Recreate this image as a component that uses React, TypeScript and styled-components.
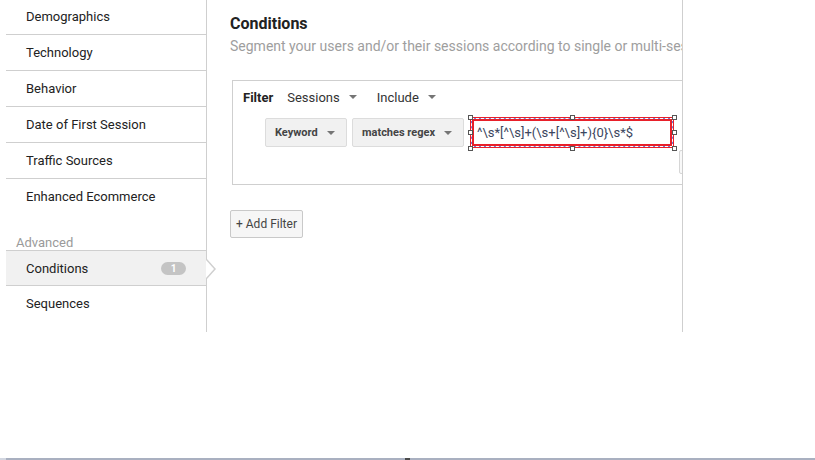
import styled, { createGlobalStyle, css } from "styled-components";

const GlobalStyle = createGlobalStyle`
  html, body {
    margin: 0;
    padding: 0;
    background: #ffffff;
  }
  body {
    font-family: Roboto, "Liberation Sans", Arial, sans-serif;
    color: #222222;
  }
  * {
    box-sizing: border-box;
  }
`;

const Page = styled.div`
  display: flex;
  flex-direction: column;
  width: 815px;
  height: 460px;
  overflow: hidden;
`;

const Layout = styled.div`
  display: flex;
  height: 332px;
`;

const Sidebar = styled.nav`
  width: 207px;
  padding-left: 6px;
  border-right: 1px solid #cfcfcf;
  position: relative;
`;

const NavList = styled.div`
  margin-top: -1px;
  display: flex;
  flex-direction: column;
`;

const NavItem = styled.div<{ active?: boolean; last?: boolean; plain?: boolean }>`
  position: relative;
  display: flex;
  align-items: center;
  justify-content: space-between;
  height: 36px;
  padding: 0 20px 0 20px;
  font-size: 13px;
  color: #222222;
  border-bottom: 1px solid #cfcfcf;

  ${(p) =>
    p.last &&
    css`
      height: 35px;
      border-bottom: 0;
    `}

  ${(p) =>
    p.plain &&
    css`
      border-bottom-color: transparent;
    `}

  ${(p) =>
    p.active &&
    css`
      background: #f1f1f1;
      border-top: 1px solid #cfcfcf;
    `}
`;

const GroupLabel = styled.div`
  height: 36px;
  display: flex;
  align-items: flex-end;
  padding: 0 0 0 10px;
  font-size: 13px;
  color: #9a9a9a;
`;

const Badge = styled.span`
  display: inline-flex;
  align-items: center;
  justify-content: center;
  width: 25px;
  height: 13px;
  border-radius: 7px;
  background: #c4c4c4;
  color: #ffffff;
  font-size: 10px;
  font-weight: 700;
`;

const Pointer = styled.span`
  position: absolute;
  right: -10px;
  top: 8px;
  width: 0;
  height: 0;
  border-top: 10px solid transparent;
  border-bottom: 10px solid transparent;
  border-left: 9px solid #cfcfcf;

  &::after {
    content: "";
    position: absolute;
    left: -10px;
    top: -9px;
    border-top: 9px solid transparent;
    border-bottom: 9px solid transparent;
    border-left: 8px solid #ffffff;
  }
`;

const Main = styled.section`
  width: 476px;
  border-right: 1px solid #cfcfcf;
  padding: 14px 0 0 23px;
  overflow: hidden;
`;

const Title = styled.h2`
  margin: 0;
  font-size: 16px;
  font-weight: 700;
  color: #222222;
  line-height: 20px;
`;

const Subtitle = styled.p`
  margin: 3px 0 0;
  font-size: 14px;
  line-height: 18px;
  color: #9e9e9e;
  white-space: nowrap;
`;

const FilterBox = styled.div`
  position: relative;
  margin: 25px 0 0 2px;
  width: 520px;
  height: 105px;
  border: 1px solid #cfcfcf;
  padding: 7px 0 0 10px;
`;

const FilterHeader = styled.div`
  display: flex;
  align-items: center;
  gap: 14px;
  height: 18px;
  font-size: 13px;
  color: #333333;
`;

const FilterLabel = styled.span`
  font-weight: 700;
  color: #222222;
`;

const TextSelect = styled.span`
  display: inline-flex;
  align-items: center;
  gap: 9px;
  margin-right: 6px;
`;

const Caret = styled.span`
  display: inline-block;
  width: 0;
  height: 0;
  border-left: 4px solid transparent;
  border-right: 4px solid transparent;
  border-top: 4px solid #757575;
`;

const RuleRow = styled.div`
  display: flex;
  align-items: center;
  gap: 5px;
  margin: 11px 0 0 22px;
`;

const DropButton = styled.div<{ width: number }>`
  display: flex;
  align-items: center;
  justify-content: space-between;
  width: ${(p) => p.width}px;
  height: 29px;
  padding: 0 11px 0 9px;
  background: #f1f1f1;
  border: 1px solid #dcdcdc;
  border-radius: 2px;
  font-size: 11px;
  font-weight: 700;
  color: #444444;
`;

const InputWrap = styled.div`
  position: relative;
  width: 204px;
  height: 31px;
  margin-left: 1px;
  border: 4px solid #e8202a;
  background: #ffffff;
  display: flex;
  align-items: center;
  padding-left: 3px;
  font-size: 13px;
  color: #3b4660;
  white-space: nowrap;

  &::before {
    content: "";
    position: absolute;
    inset: -3px;
    border: 1px solid #6c7fd8;
    pointer-events: none;
  }
  &::after {
    content: "";
    position: absolute;
    inset: -3px;
    border: 1px dashed #ffffff;
    pointer-events: none;
  }
`;

const Handle = styled.span<{ x: string; y: string }>`
  position: absolute;
  left: ${(p) => p.x};
  top: ${(p) => p.y};
  width: 5px;
  height: 5px;
  margin: -2.5px 0 0 -2.5px;
  background: #ffffff;
  border: 1px solid #555555;
  z-index: 2;
`;

const PeekButton = styled.div`
  position: absolute;
  left: 446px;
  top: 69px;
  width: 40px;
  height: 24px;
  border: 1px solid #d6d6d6;
  border-radius: 2px;
  background: #f8f8f8;
`;

const AddFilter = styled.button`
  margin-top: 25px;
  height: 28px;
  padding: 0 5px;
  background: #f6f6f6;
  border: 1px solid #c9c9c9;
  border-radius: 2px;
  font-family: inherit;
  font-size: 12px;
  color: #444444;
`;

const BottomBar = styled.div`
  margin-top: auto;
  height: 2px;
  display: flex;
  background: #a9b0c0;
`;

const BarStart = styled.span`
  width: 6px;
  background: #d2d6e0;
`;

const BarMark = styled.span`
  width: 5px;
  margin-left: 399px;
  background: #4a4a4a;
`;

const sections = [
  "Demographics",
  "Technology",
  "Behavior",
  "Date of First Session",
  "Traffic Sources",
  "Enhanced Ecommerce",
];

const handles: [string, string][] = [
  ["-4px", "-4px"],
  ["50%", "-4px"],
  ["calc(100% + 4px)", "-4px"],
  ["-4px", "50%"],
  ["calc(100% + 4px)", "50%"],
  ["-4px", "calc(100% + 4px)"],
  ["50%", "calc(100% + 4px)"],
  ["calc(100% + 4px)", "calc(100% + 4px)"],
];

export default function App() {
  return (
    <Page>
      <GlobalStyle />
      <Layout>
        <Sidebar>
          <NavList>
            {sections.map((s, i) => (
              <NavItem key={s} last={i === sections.length - 1}>
                {s}
              </NavItem>
            ))}
            <GroupLabel>Advanced</GroupLabel>
            <NavItem active>
              Conditions
              <Badge>1</Badge>
              <Pointer />
            </NavItem>
            <NavItem plain>Sequences</NavItem>
          </NavList>
        </Sidebar>
        <Main>
          <Title>Conditions</Title>
          <Subtitle>
            Segment your users and/or their sessions according to single or multi-session conditions.
          </Subtitle>
          <FilterBox>
            <FilterHeader>
              <FilterLabel>Filter</FilterLabel>
              <TextSelect>
                Sessions <Caret />
              </TextSelect>
              <TextSelect>
                Include <Caret />
              </TextSelect>
            </FilterHeader>
            <RuleRow>
              <DropButton width={82}>
                Keyword <Caret />
              </DropButton>
              <DropButton width={112}>
                matches regex <Caret />
              </DropButton>
              <InputWrap>
                {"^\\s*[^\\s]+(\\s+[^\\s]+){0}\\s*$"}
                {handles.map(([x, y]) => (
                  <Handle key={x + y} x={x} y={y} />
                ))}
              </InputWrap>
            </RuleRow>
            <PeekButton />
          </FilterBox>
          <AddFilter>+ Add Filter</AddFilter>
        </Main>
      </Layout>
      <BottomBar>
        <BarStart />
        <BarMark />
      </BottomBar>
    </Page>
  );
}
